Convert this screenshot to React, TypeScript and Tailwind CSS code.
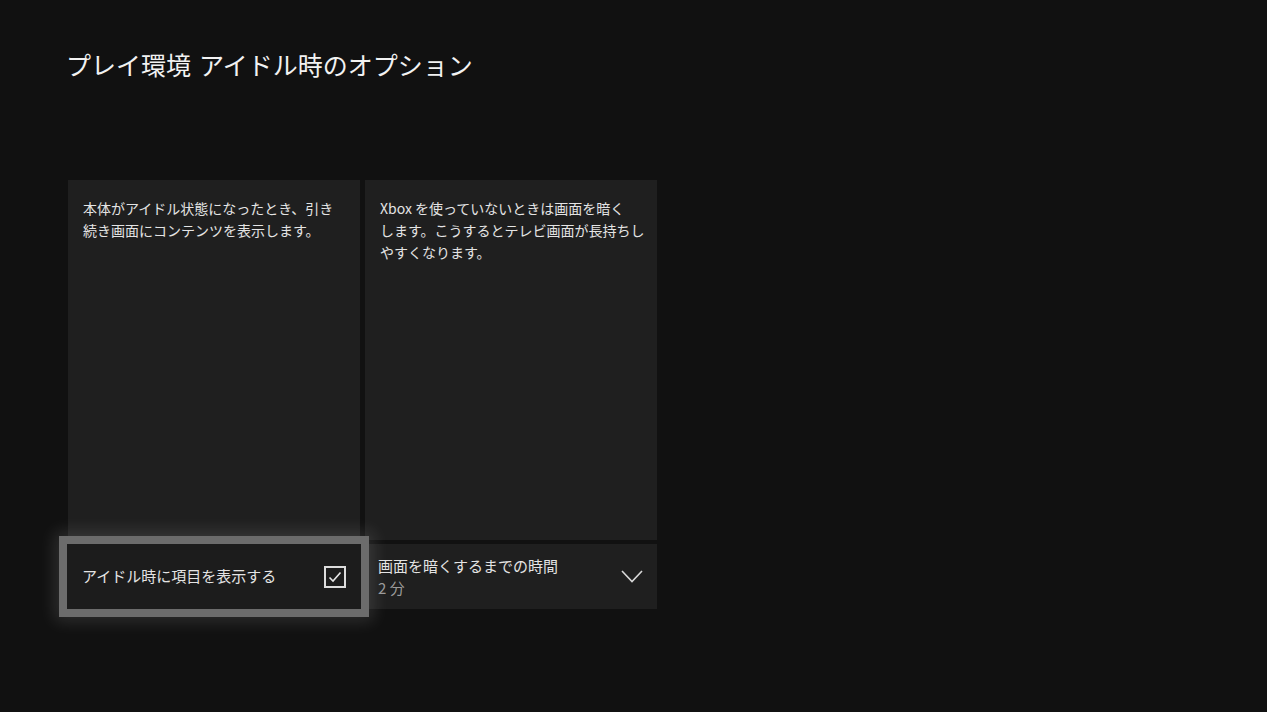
import React from 'react'

const font = { fontFamily: '"Noto Sans CJK JP", "Noto Sans", sans-serif' }

function InfoCard({ lines }: { lines: string[] }) {
  return (
    <div className="h-[360px] bg-[#1f1f1f] px-[15px] pt-[17px] text-[14px] leading-[22px] text-[#e4e4e4]">
      {lines.map((line) => (
        <div key={line} className="whitespace-nowrap">
          {line}
        </div>
      ))}
    </div>
  )
}

function CheckIcon() {
  return (
    <div className="flex h-[22px] w-[22px] items-center justify-center border-2 border-[#dcdcdc]">
      <svg width="14" height="12" viewBox="0 0 14 12" fill="none" stroke="#e6e6e6" strokeWidth="1.6">
        <path d="M1.5 6.5 L5 10 L12.5 1.5" />
      </svg>
    </div>
  )
}

function Chevron() {
  return (
    <svg width="22" height="13" viewBox="0 0 22 13" fill="none" stroke="#d8d8d8" strokeWidth="1.6">
      <path d="M1 1 L11 11.5 L21 1" />
    </svg>
  )
}

export default function App() {
  return (
    <div className="h-[712px] w-full overflow-hidden bg-[#111111] text-white" style={font}>
      <h1 className="flex pl-[66px] pt-[46px] text-[25px] font-normal leading-[36px] text-[#f2f2f2]">
        <span>プレイ環境</span>
        <span className="ml-[8px]">アイドル時のオプション</span>
      </h1>

      <div className="ml-[68px] mt-[98px] grid w-[589px] grid-cols-[292px_292px] gap-x-[5px] gap-y-[4px]">
        <InfoCard lines={['本体がアイドル状態になったとき、引き', '続き画面にコンテンツを表示します。']} />
        <InfoCard
          lines={['Xbox を使っていないときは画面を暗く', 'します。こうするとテレビ画面が長持ちし', 'やすくなります。']}
        />

        <div className="relative -ml-px flex h-[65px] w-[294px] items-center justify-between bg-[#1c1c1c] pl-[15px] pr-[15px] outline-8 outline-[#6c6c6c] shadow-[0_0_16px_12px_rgba(255,255,255,0.13)]">
          <span className="text-[15px] text-[#e4e4e4]">アイドル時に項目を表示する</span>
          <CheckIcon />
        </div>

        <div className="flex h-[65px] items-center justify-between bg-[#1f1f1f] pl-[13px] pr-[14px]">
          <div className="leading-[22px]">
            <div className="text-[15px] text-[#e4e4e4]">画面を暗くするまでの時間</div>
            <div className="text-[15px] text-[#9a9a9a]">2 分</div>
          </div>
          <Chevron />
        </div>
      </div>
    </div>
  )
}
